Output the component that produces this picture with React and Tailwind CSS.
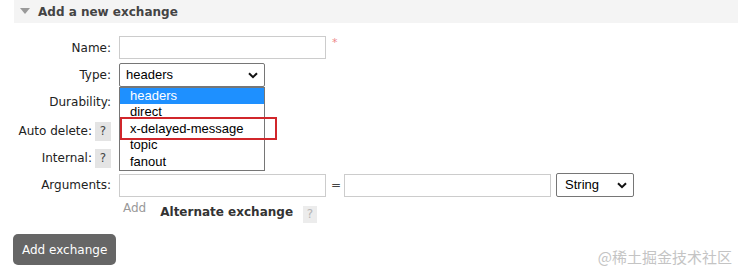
const Help = ({ faded }) => (
    <span
        className={
            faded
                ? "inline-flex items-center justify-center w-[14px] h-[17px] bg-[#ececec] text-[#b5b5b5] text-[12px]"
                : "inline-flex items-center justify-center w-[16px] h-[19px] bg-[#e4e4e4] text-[#444] text-[12px]"
        }
    >
        ?
    </span>
);

const Chevron = () => (
    <svg width="10" height="7" viewBox="0 0 10 7" className="shrink-0">
        <path d="M1 1.2 L5 5.2 L9 1.2" fill="none" stroke="#111" strokeWidth="2" />
    </svg>
);

const Row = ({ label, height, children, help }) => (
    <div className="flex items-center" style={{ height }}>
        <div className="w-[111px] flex items-center justify-end gap-[3px] text-[12px] text-[#222]">
            <span>{label}</span>
            {help && <Help />}
        </div>
        <div className="ml-[8px] flex items-center">{children}</div>
    </div>
);

const App = () => {
    const options = ["headers", "direct", "x-delayed-message", "topic", "fanout"];

    return (
        <div className="w-[738px] h-[279px] bg-white relative overflow-hidden font-['DejaVu_Sans',sans-serif]">
            <div className="ml-[14px] h-[23px] bg-[#f4f4f4] flex items-center">
                <svg width="10" height="7" viewBox="0 0 10 7" className="ml-[6px]">
                    <path d="M0 0 L10 0 L5 6 Z" fill="#9a9a9a" />
                </svg>
                <span className="ml-[8px] text-[12px] font-bold text-[#444]">Add a new exchange</span>
            </div>

            <div className="mt-[13px]">
                <Row label="Name:" height={23}>
                    <div className="w-[207px] h-[23px] border border-[#ccc] bg-white" />
                    <span className="ml-[6px] -mt-[8px] text-[11px] text-[#e88]">*</span>
                </Row>
                <div className="h-[4px]" />
                <Row label="Type:" height={24}>
                    <div className="relative">
                        <div className="w-[146px] h-[24px] border border-[#767676] rounded-[2px] bg-white flex items-center justify-between pl-[6px] pr-[6px] font-['Liberation_Sans',sans-serif] text-[13px] text-black">
                            <span>headers</span>
                            <Chevron />
                        </div>
                        <div className="absolute left-0 top-[24px] w-[146px] border border-[#767676] bg-white font-['Liberation_Sans',sans-serif] text-[13px] text-black z-10">
                            {options.map((o, i) => (
                                <div
                                    key={o}
                                    className={
                                        i === 0
                                            ? "h-[16px] leading-[16px] pl-[10px] bg-[#1e90ff] text-white"
                                            : "h-[16.5px] leading-[16px] pl-[10px]"
                                    }
                                >
                                    {o}
                                </div>
                            ))}
                        </div>
                        <div className="absolute left-[1px] top-[54px] w-[157px] h-[23px] border-2 border-[#d1262b] z-20" />
                    </div>
                </Row>
                <Row label="Durability:" height={30} />
                <Row label="Auto delete:" height={28} help />
                <Row label="Internal:" height={26} help />
                <div className="h-[2px]" />
                <Row label="Arguments:" height={24}>
                    <div className="w-[207px] h-[23px] border border-[#ccc] bg-white" />
                    <span className="ml-[5px] mr-[3px] text-[12px] text-[#444]">=</span>
                    <div className="w-[207px] h-[23px] border border-[#ccc] bg-white" />
                    <div className="ml-[5px] w-[78px] h-[24px] border border-[#767676] rounded-[2px] bg-white flex items-center justify-between pl-[8px] pr-[6px] font-['Liberation_Sans',sans-serif] text-[13px] text-black">
                        <span>String</span>
                        <Chevron />
                    </div>
                </Row>
                <div className="flex items-start ml-[123px] h-[24px]">
                    <span className="text-[12px] text-[#999] mt-[2px]">Add</span>
                    <span className="ml-[14px] mt-[6px] text-[12px] font-bold text-[#333]">Alternate exchange</span>
                    <span className="ml-[10px] mt-[4px]">
                        <Help faded />
                    </span>
                </div>
            </div>

            <button className="ml-[13px] mt-[13px] h-[31px] px-[9px] rounded-[5px] bg-[#666] text-white text-[12px]">
                Add exchange
            </button>

            <div className="absolute right-[6px] bottom-[11px] text-[15px] text-[#c4c4c4] font-['Noto_Sans_CJK_SC',sans-serif]">
                @稀土掘金技术社区
            </div>
        </div>
    );
};

export default App;
